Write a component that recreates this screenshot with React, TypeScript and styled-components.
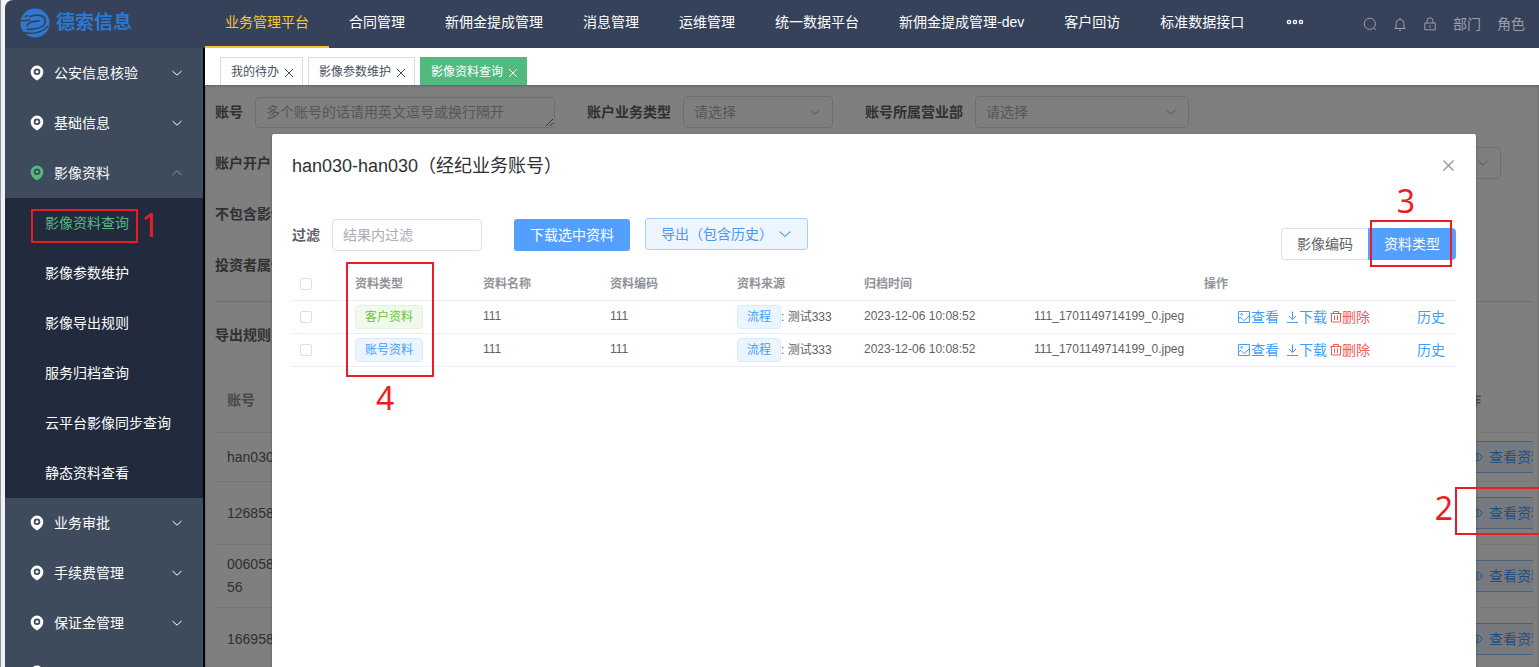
import React from "react";
import styled, { createGlobalStyle, css } from "styled-components";

const GlobalStyle = createGlobalStyle`
  *, *::before, *::after { box-sizing: border-box; }
  html, body { margin: 0; padding: 0; background: #fff; }
  body, button, input, select, textarea {
    font-family: "Liberation Sans", "Noto Sans CJK SC", sans-serif;
    font-size: 14px;
  }
  button { margin: 0; padding: 0; border: 0; background: none; cursor: pointer; white-space: nowrap; }
  svg { display: block; flex: none; }
`;

/* ---------- icons ---------- */

const Chevron = ({ up, size = 12 }: { up?: boolean; size?: number }) => (
  <svg width={size} height={size} viewBox="0 0 12 12" fill="none" stroke="currentColor" strokeWidth="1">
    <path d={up ? "M1.500 8 6 3.800 10.500 8" : "M1.500 4 6 8.200 10.500 4"} />
  </svg>
);

const Cross = ({ size = 12 }: { size?: number }) => (
  <svg width={size} height={size} viewBox="0 0 12 12" fill="none" stroke="currentColor" strokeWidth="1">
    <path d="M2 2 10 10M10 2 2 10" />
  </svg>
);

const Pin = () => (
  <svg width="14" height="16" viewBox="0 0 14 16" fill="currentColor">
    <path
      fillRule="evenodd"
      d="M7 .6a6.300 6.300 0 0 0-6.300 6.300c0 2.500 1.200 4.300 3.400 6.700L7 15.400l2.900-1.800c2.200-2.400 3.400-4.200 3.400-6.700A6.300 6.300 0 0 0 7 .6Zm0 2.900a3.300 3.300 0 1 1 0 6.600 3.300 3.300 0 0 1 0-6.600Z"
    />
    <circle cx="7" cy="6.800" r="1.500" />
  </svg>
);

const Logo = () => (
  <svg width="30" height="30" viewBox="0 0 30 30" fill="none">
    <circle cx="15" cy="15" r="14.500" fill="#2d79d2" />
    <g stroke="#35425a" strokeLinecap="round">
      <path d="M10 8.600C16 6 25.500 6.600 25.300 13 25.100 18.500 18 21.500 7 21.300" strokeWidth="1.800" />
      <path d="M7 17.800C8 14.600 12 13.200 19 12.900" strokeWidth="1.700" />
      <path d="M0 12.600c3 .6 6-.4 9.500-.6" strokeWidth="1.500" />
      <path d="M4 24.500c8 2 18 .5 24-6.500" strokeWidth="1.500" />
      <path d="M5.200 8.300 8 7.600" strokeWidth="1.300" />
    </g>
  </svg>
);

const Search = () => (
  <svg width="14" height="14" viewBox="0 0 14 14" fill="none" stroke="currentColor">
    <circle cx="6.800" cy="6.800" r="5.600" />
    <path d="m10.800 11 2 2" />
  </svg>
);

const Bell = () => (
  <svg width="14" height="14" viewBox="0 0 14 14" fill="none" stroke="currentColor">
    <path d="M1.500 11.500h11M3 11.500V6.500a4 4 0 0 1 8 0v5M7 .8v1.700M5.800 13.300h2.400" />
  </svg>
);

const Lock = () => (
  <svg width="14" height="14" viewBox="0 0 14 14" fill="none" stroke="currentColor">
    <path d="M1.800 6h10.400v6.800H1.800zM4 6V3.800a3 3 0 0 1 6 0V6M7 8.200v2.600" />
  </svg>
);

const Picture = () => (
  <svg width="14" height="14" viewBox="0 0 14 14" fill="none" stroke="currentColor">
    <path d="M1.500 1.500h11v11h-11zM1.500 8.500 4 7.500l3.200 3.200L12.500 5.500" />
    <circle cx="4.600" cy="4.400" r=".9" />
  </svg>
);

const Download = () => (
  <svg width="13" height="14" viewBox="0 0 13 14" fill="none" stroke="currentColor">
    <path d="M1 12.500h11M6.500 1.500v8M3 6 6.500 9.500 10 6" />
  </svg>
);

const Trash = () => (
  <svg width="12" height="14" viewBox="0 0 12 14" fill="none" stroke="currentColor">
    <path d="M.5 3.500h11M1.500 3.500v8.500h9v-8.500M3.500 3.500v-2h5v2M4.500 5.500v4.500M7.500 5.500v4.500" />
  </svg>
);

const Eye = () => (
  <svg width="14" height="14" viewBox="0 0 14 14" fill="none" stroke="currentColor">
    <path d="M.8 7C3.500 1.700 10.500 1.700 13.200 7 10.500 12.300 3.500 12.300.8 7Z" />
    <circle cx="7" cy="7" r="2" />
  </svg>
);

/* ---------- shell ---------- */

const Page = styled.div`
  position: relative;
  display: flex;
  height: 100vh;
  overflow: hidden;
`;

const EdgeStrip = styled.div`
  flex: none;
  width: 5px;
  background: #f4f1f5;
  border-left: 1px solid #8d93a0;
`;

const Shell = styled.div`
  flex: 1;
  min-width: 0;
  display: flex;
  flex-direction: column;
`;

const Header = styled.header`
  flex: none;
  display: flex;
  height: 48px;
  background: #35425a;
  border-top-left-radius: 8px;
  color: #fff;
`;

const Brand = styled.div`
  flex: none;
  display: flex;
  align-items: center;
  gap: 6px;
  width: 200px;
  padding: 0 0 2px 15px;
  color: #2d79d2;
  font-size: 19px;
  font-weight: bold;
  line-height: 28px;
`;

const Nav = styled.nav`
  flex: 1;
  display: flex;
  min-width: 0;
`;

const NavLink = styled.a<{ $active?: boolean }>`
  padding: 0 20px;
  color: ${(p) => (p.$active ? "#f8c631" : "#fff")};
  border-bottom: 2px solid ${(p) => (p.$active ? "#f8c631" : "transparent")};
  line-height: 44px;
  text-decoration: none;
  white-space: nowrap;
`;

const MoreButton = styled.button`
  display: flex;
  align-items: center;
  padding: 0 22px 4px;
  color: #fff;
`;

const Tools = styled.div`
  flex: none;
  display: flex;
  align-items: center;
  gap: 16px;
  padding-right: 14px;
  color: #9a9fa8;

  button { color: inherit; line-height: 46px; }
`;

const Body = styled.div`
  flex: 1;
  min-height: 0;
  display: flex;
`;

const Sidebar = styled.aside`
  flex: none;
  width: 200px;
  overflow: hidden;
  background: #3e4b5c;
  border-right: 2px solid #000;
`;

const MenuButton = styled.button<{ $open?: boolean }>`
  display: flex;
  align-items: center;
  gap: 10px;
  width: 100%;
  height: 50px;
  padding: 0 20px 0 25px;
  color: ${(p) => (p.$open ? "#52b97f" : "#fff")};
  text-align: left;

  span { flex: 1; padding-bottom: 2px; color: #fff; }
`;

const SubMenu = styled.div`
  background: #222b3d;
`;

const SubLink = styled.a<{ $active?: boolean }>`
  display: block;
  padding-left: 40px;
  color: ${(p) => (p.$active ? "#52b97f" : "#fff")};
  line-height: 50px;
  text-decoration: none;
`;

const Main = styled.main`
  flex: 1;
  min-width: 0;
  display: flex;
  flex-direction: column;
`;

const TabBar = styled.div`
  flex: none;
  display: flex;
  align-items: flex-end;
  gap: 5px;
  height: 37px;
  padding-left: 15px;
  background: #fff;
`;

const Tab = styled.div<{ $active?: boolean }>`
  display: flex;
  align-items: center;
  gap: 4px;
  height: 28px;
  padding: 0 7px 0 10px;
  border: 1px solid ${(p) => (p.$active ? "#52b97f" : "#d8dce5")};
  border-bottom: 0;
  background: ${(p) => (p.$active ? "#52b97f" : "#fff")};
  color: ${(p) => (p.$active ? "#fff" : "#495060")};

  button { color: inherit; font-size: 12px; line-height: 26px; }
  button + button { padding-top: 2px; }
`;

const Workspace = styled.div`
  position: relative;
  flex: 1;
  min-height: 0;
  overflow: hidden;
`;

/* ---------- search form and account table ---------- */

const Underlay = styled.div`
  height: 100%;
  padding: 11px 6px 0 10px;
  overflow: hidden;
  box-shadow: inset 0 1px 3px rgba(0, 0, 0, 0.25);
  color: #606266;
`;

const FormRow = styled.div`
  display: flex;
  align-items: center;
  gap: 32px;
  height: 32px;
  margin-bottom: 19px;
`;

const Field = styled.label<{ $end?: boolean }>`
  display: flex;
  align-items: center;
  gap: 12px;
  font-weight: bold;
  white-space: nowrap;
  ${(p) => p.$end && css`margin: 0 32px 0 auto;`}
`;

const LabelText = styled.span`
  padding-bottom: 2px;
`;

const control = css`
  border: 1px solid #dcdfe6;
  border-radius: 4px;
  background: #fff;
  color: #606266;
  &::placeholder { color: #a9adb6; opacity: 1; }
`;

const AccountBox = styled.textarea`
  ${control}
  width: 300px;
  height: 31px;
  padding: 4px 10px;
  line-height: 20px;
  overflow: hidden;
`;

const SelectWrap = styled.span<{ $width: number }>`
  position: relative;
  display: block;
  width: ${(p) => p.$width}px;

  select {
    ${control}
    width: 100%;
    height: 32px;
    padding: 0 10px;
    color: #a9adb6;
    appearance: none;
  }
  svg {
    position: absolute;
    right: 12px;
    top: 10px;
    color: #a9adb6;
    pointer-events: none;
  }
`;

const Select = ({ width, label }: { width: number; label?: string }) => (
  <SelectWrap $width={width}>
    <select defaultValue="" aria-label={label}>
      <option value="">请选择</option>
    </select>
    <Chevron />
  </SelectWrap>
);

const ExportRow = styled.div`
  margin-top: 20px;
  padding-top: 22px;
  border-top: 1px solid #dcdfe6;
  font-weight: bold;
  line-height: 22px;
`;

const AccountTable = styled.table`
  width: 100%;
  margin-top: 24px;
  border-collapse: collapse;
  table-layout: fixed;

  th, td {
    height: 63px;
    padding: 0 12px;
    border-bottom: 1px solid #ebeef5;
    line-height: 23px;
    text-align: left;
    overflow: hidden;
    white-space: nowrap;
  }
  th { height: 62px; color: #909399; }
  td { padding-top: 1px; }
  tbody tr:first-child td { height: 49px; }
  th:last-child, td:last-child { width: 80px; padding: 0; }
`;

const ViewButton = styled.button`
  display: flex;
  align-items: center;
  gap: 6px;
  height: 32px;
  padding: 0 15px;
  border: 1px solid #8cc5ff;
  border-radius: 4px;
  background: #ecf5ff;
  color: #409eff;

  span { padding-bottom: 2px; }
`;

/* ---------- dialog ---------- */

const Mask = styled.div`
  position: absolute;
  inset: 0;
  padding: 49px 63px 0 67px;
  background: rgba(0, 0, 0, 0.5);
`;

const Dialog = styled.section`
  height: 100%;
  padding: 20px;
  border-radius: 2px 2px 0 0;
  background: #fff;
  box-shadow: 0 1px 3px rgba(0, 0, 0, 0.3);
  color: #606266;
`;

const DialogHead = styled.div`
  display: flex;
  align-items: center;
  justify-content: space-between;
  height: 24px;

  h2 { margin: 0; color: #303133; font-size: 18px; font-weight: normal; line-height: 24px; }
  button { padding-bottom: 2px; color: #909399; }
`;

const FilterBar = styled.div`
  display: flex;
  align-items: center;
  height: 64px;
  margin-top: 25px;
`;

const FilterInput = styled.input`
  ${control}
  width: 150px;
  height: 32px;
  padding: 0 10px;
`;

const DownloadButton = styled.button`
  height: 32px;
  margin: 0 15px 0 32px;
  padding: 0 16px 2px;
  border-radius: 3px;
  background: #539fff;
  color: #fff;
`;

const ExportButton = styled.button`
  display: flex;
  align-items: center;
  gap: 5px;
  height: 32px;
  margin-bottom: 2px;
  padding: 0 15px;
  border: 1px solid #a5cfff;
  border-radius: 3px;
  background: #edf5ff;
  color: #4b98f5;

  span { padding-bottom: 2px; }
`;

const Segments = styled.div`
  display: flex;
  margin: 18px 0 0 auto;
`;

const Segment = styled.button<{ $active?: boolean }>`
  height: 32px;
  padding: 0 15px 2px;
  border: 1px solid ${(p) => (p.$active ? "#539fff" : "#dcdfe6")};
  border-radius: ${(p) => (p.$active ? "0 4px 4px 0" : "4px 0 0 4px")};
  border-right-width: ${(p) => (p.$active ? 1 : 0)}px;
  background: ${(p) => (p.$active ? "#539fff" : "#fff")};
  color: ${(p) => (p.$active ? "#fff" : "#606266")};
`;

const FileTable = styled.table`
  width: 100%;
  border-collapse: collapse;
  table-layout: fixed;
  font-size: 12px;

  th, td {
    height: 33px;
    padding: 0 10px;
    border-bottom: 1px solid #ebeef5;
    line-height: 23px;
    text-align: left;
    white-space: nowrap;
  }
  th { padding-top: 2px; color: #909399; }
  th:first-child, td:first-child { padding-left: 8px; }
`;

const Check = styled.input`
  display: block;
  width: 12px;
  height: 12px;
  margin: 0;
  border: 1px solid #dcdfe6;
  border-radius: 2px;
  background: #fff;
  appearance: none;
`;

const Tag = styled.span<{ $tone: "green" | "blue" }>`
  display: inline-block;
  height: 24px;
  padding: 0 9px;
  border: 1px solid ${(p) => (p.$tone === "green" ? "#e1f3d8" : "#d9ecff")};
  border-radius: 4px;
  background: ${(p) => (p.$tone === "green" ? "#f0f9eb" : "#ecf5ff")};
  color: ${(p) => (p.$tone === "green" ? "#67c23a" : "#409eff")};
  line-height: 22px;
`;

const Actions = styled.div`
  display: flex;
  align-items: center;
  gap: 7px;
  padding: 0 1px 0 33px;
`;

const ActionButton = styled.button<{ $danger?: boolean; $last?: boolean }>`
  display: flex;
  align-items: center;
  color: ${(p) => (p.$danger ? "#f05b5b" : "#409eff")};
  line-height: 22px;
  ${(p) => p.$danger && css`margin-left: -4px;`}
  ${(p) => p.$last && css`margin-left: auto;`}
`;

/* ---------- numbered guide marks over the page ---------- */

const MarkBox = styled.div`
  position: absolute;
  border: 2px solid #ed1c24;
  pointer-events: none;
`;

const MarkNumber = styled.span`
  position: absolute;
  color: #ed1c24;
  font-family: "Noto Sans", sans-serif;
  font-size: 32px;
  line-height: 32px;
  pointer-events: none;
`;

const MenuBox = styled(MarkBox)`left: 31px; top: 209px; width: 107px; height: 34px;`;
const MenuNumber = styled(MarkNumber)`left: 141px; top: 209px;`;
const RowBox = styled(MarkBox)`right: -2px; top: 487px; width: 86px; height: 48px;`;
const RowNumber = styled(MarkNumber)`right: 86px; top: 492px;`;
const SegmentBox = styled(MarkBox)`right: 87px; top: 220px; width: 82px; height: 47px;`;
const SegmentNumber = styled(MarkNumber)`right: 124px; top: 185px;`;
const TypeBox = styled(MarkBox)`left: 346px; top: 262px; width: 88px; height: 115px;`;
const TypeNumber = styled(MarkNumber)`left: 376px; top: 382px;`;

/* ---------- data ---------- */

const NAV = [
  "业务管理平台", "合同管理", "新佣金提成管理", "消息管理", "运维管理",
  "统一数据平台", "新佣金提成管理-dev", "客户回访", "标准数据接口",
];
const SUB = ["影像资料查询", "影像参数维护", "影像导出规则", "服务归档查询", "云平台影像同步查询", "静态资料查看"];
const TABS = ["我的待办", "影像参数维护", "影像资料查询"];
const ACCOUNTS = [["han030"], ["126858"], ["006058", "56"], ["166958"]];
const FILES: { type: string; tone: "green" | "blue" }[] = [
  { type: "客户资料", tone: "green" },
  { type: "账号资料", tone: "blue" },
];

const MenuItem = ({ label, open }: { label: string; open?: boolean }) => (
  <MenuButton $open={open} aria-expanded={!!open}>
    <Pin />
    <span>{label}</span>
    <Chevron up={open} />
  </MenuButton>
);

export default function App() {
  return (
    <>
      <GlobalStyle />
      <Page>
        <EdgeStrip />
        <Shell>
          <Header>
            <Brand><Logo />德索信息</Brand>
            <Nav>
              {NAV.map((n, i) => <NavLink key={n} href="#" $active={i === 0}>{n}</NavLink>)}
              <MoreButton aria-label="更多">
                <svg width="18" height="6" viewBox="0 0 18 6" fill="none" stroke="currentColor" strokeWidth="1.400">
                  <circle cx="3" cy="3" r="1.600" /><circle cx="9" cy="3" r="1.600" /><circle cx="15" cy="3" r="1.600" />
                </svg>
              </MoreButton>
            </Nav>
            <Tools>
              <button aria-label="搜索"><Search /></button>
              <button aria-label="通知"><Bell /></button>
              <button aria-label="锁定"><Lock /></button>
              <button>部门</button>
              <button>角色</button>
            </Tools>
          </Header>
          <Body>
            <Sidebar>
              <MenuItem label="公安信息核验" />
              <MenuItem label="基础信息" />
              <MenuItem label="影像资料" open />
              <SubMenu>
                {SUB.map((s, i) => <SubLink key={s} href="#" $active={i === 0}>{s}</SubLink>)}
              </SubMenu>
              <MenuItem label="业务审批" />
              <MenuItem label="手续费管理" />
              <MenuItem label="保证金管理" />
              <MenuItem label="" />
            </Sidebar>
            <Main>
              <TabBar>
                {TABS.map((t, i) => (
                  <Tab key={t} $active={i === 2}>
                    <button>{t}</button>
                    <button aria-label="关闭"><Cross /></button>
                  </Tab>
                ))}
              </TabBar>
              <Workspace>
                <Underlay>
                  <FormRow>
                    <Field>
                      <LabelText>账号</LabelText>
                      <AccountBox rows={1} placeholder="多个账号的话请用英文逗号或换行隔开" />
                    </Field>
                    <Field><LabelText>账户业务类型</LabelText><Select width={150} /></Field>
                    <Field><LabelText>账号所属营业部</LabelText><Select width={214} /></Field>
                  </FormRow>
                  <FormRow>
                    <LabelText as="strong">账户开户</LabelText>
                    <Field $end><Select width={214} label="请选择" /></Field>
                  </FormRow>
                  <FormRow><LabelText as="strong">不包含影像</LabelText></FormRow>
                  <FormRow><LabelText as="strong">投资者属性</LabelText></FormRow>
                  <ExportRow>导出规则</ExportRow>
                  <AccountTable>
                    <thead><tr><th>账号</th><th>操作</th></tr></thead>
                    <tbody>
                      {ACCOUNTS.map((lines) => (
                        <tr key={lines[0]}>
                          <td>{lines.map((l) => <div key={l}>{l}</div>)}</td>
                          <td><ViewButton><Eye /><span>查看资料</span></ViewButton></td>
                        </tr>
                      ))}
                    </tbody>
                  </AccountTable>
                </Underlay>
                <Mask>
                  <Dialog role="dialog" aria-labelledby="dialog-title">
                    <DialogHead>
                      <h2 id="dialog-title">han030-han030（经纪业务账号）</h2>
                      <button aria-label="关闭"><Cross size={15} /></button>
                    </DialogHead>
                    <FilterBar>
                      <Field><LabelText>过滤</LabelText><FilterInput placeholder="结果内过滤" /></Field>
                      <DownloadButton>下载选中资料</DownloadButton>
                      <ExportButton><span>导出（包含历史）</span><Chevron size={14} /></ExportButton>
                      <Segments>
                        <Segment>影像编码</Segment>
                        <Segment $active>资料类型</Segment>
                      </Segments>
                    </FilterBar>
                    <FileTable>
                      <colgroup>
                        <col width="53" /><col width="128" /><col width="127" /><col width="127" />
                        <col width="127" /><col width="170" /><col width="170" /><col />
                      </colgroup>
                      <thead>
                        <tr>
                          <th><Check type="checkbox" aria-label="全选" /></th>
                          <th>资料类型</th><th>资料名称</th><th>资料编码</th><th>资料来源</th>
                          <th>归档时间</th><th /><th>操作</th>
                        </tr>
                      </thead>
                      <tbody>
                        {FILES.map((f) => (
                          <tr key={f.type}>
                            <td><Check type="checkbox" aria-label={f.type} /></td>
                            <td><Tag $tone={f.tone}>{f.type}</Tag></td>
                            <td>111</td>
                            <td>111</td>
                            <td><Tag $tone="blue">流程</Tag>: 测试333</td>
                            <td>2023-12-06 10:08:52</td>
                            <td>111_1701149714199_0.jpeg</td>
                            <td>
                              <Actions>
                                <ActionButton><Picture />查看</ActionButton>
                                <ActionButton><Download />下载</ActionButton>
                                <ActionButton $danger><Trash />删除</ActionButton>
                                <ActionButton $last>历史</ActionButton>
                              </Actions>
                            </td>
                          </tr>
                        ))}
                      </tbody>
                    </FileTable>
                  </Dialog>
                </Mask>
              </Workspace>
            </Main>
          </Body>
        </Shell>
        <MenuBox /><MenuNumber>1</MenuNumber>
        <RowBox /><RowNumber>2</RowNumber>
        <SegmentBox /><SegmentNumber>3</SegmentNumber>
        <TypeBox /><TypeNumber>4</TypeNumber>
      </Page>
    </>
  );
}
